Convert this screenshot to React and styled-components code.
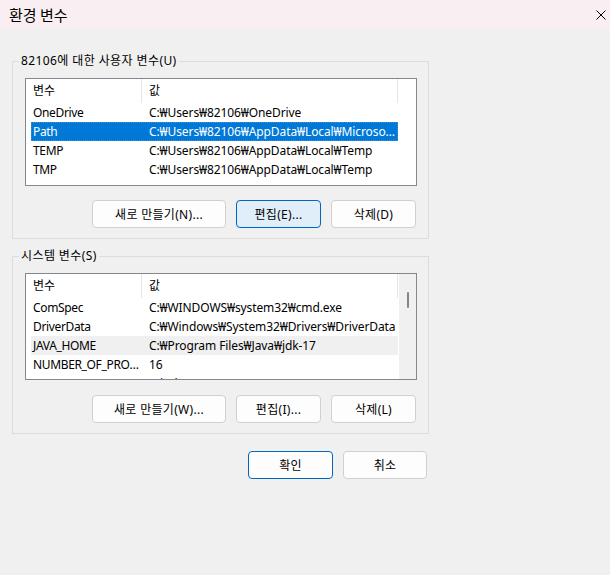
import React from "react";
import styled, { createGlobalStyle } from "styled-components";

const GlobalStyle = createGlobalStyle`
  html, body {
    margin: 0;
    padding: 0;
    background: #f0f0f0;
  }
  body {
    font-family: "Noto Sans", "Noto Sans CJK KR", sans-serif;
    font-size: 12px;
    color: #000;
  }
`;

const userVars = [
  { name: "OneDrive", value: "C:₩Users₩82106₩OneDrive" },
  { name: "Path", value: "C:₩Users₩82106₩AppData₩Local₩Microsoft₩WindowsApps;", selected: true },
  { name: "TEMP", value: "C:₩Users₩82106₩AppData₩Local₩Temp" },
  { name: "TMP", value: "C:₩Users₩82106₩AppData₩Local₩Temp" },
];

const systemVars = [
  { name: "ComSpec", value: "C:₩WINDOWS₩system32₩cmd.exe" },
  { name: "DriverData", value: "C:₩Windows₩System32₩Drivers₩DriverData" },
  { name: "JAVA_HOME", value: "C:₩Program Files₩Java₩jdk-17", hover: true },
  { name: "NUMBER_OF_PROCESSORS", value: "16" },
  { name: "OS", value: "Windows_NT" },
];

const Window = styled.div`
  width: 610px;
  height: 575px;
  background: #f0f0f0;
`;

const TitleBar = styled.div`
  height: 29px;
  display: flex;
  align-items: center;
  justify-content: space-between;
  padding: 0 4px 0 9px;
  background: #f9eff3;
`;

const Title = styled.span`
  font-family: "Noto Sans CJK KR", sans-serif;
  font-size: 15px;
  line-height: 29px;
`;

const CloseButton = styled.div`
  width: 10px;
  height: 10px;
  display: flex;
`;

const Body = styled.div`
  padding: 24px 0 0 12px;
  width: 417px;
`;

const Group = styled.fieldset`
  margin: 0 0 ${(p) => p.$gapBelow || 0}px 0;
  padding: 0;
  border: 1px solid #dcdcdc;
  min-inline-size: 0;
`;

const Legend = styled.legend`
  margin-left: 6px;
  padding: 0 2px;
  line-height: 16px;
  letter-spacing: 0.4px;
`;

const GroupInner = styled.div`
  padding: 9px 11px 10px 12px;
`;

const ListView = styled.div`
  box-sizing: border-box;
  height: ${(p) => p.$height}px;
  border: 1px solid #828790;
  background: #fff;
  display: flex;
  overflow: hidden;
`;

const Table = styled.div`
  padding-left: 5px;
  width: 367px;
  flex-shrink: 0;
`;

const HeaderRow = styled.div`
  display: flex;
  height: 24px;
  line-height: 24px;
`;

const HeaderCell = styled.div`
  box-sizing: border-box;
  width: ${(p) => p.$width}px;
  padding-left: ${(p) => p.$indent}px;
  border-right: 1px solid #e5e5e5;
`;

const Row = styled.div`
  display: flex;
  height: 19px;
  line-height: 19px;
  background: ${(p) => (p.$selected ? "#0078d7" : p.$hover ? "#f0f0f0" : "transparent")};
  color: ${(p) => (p.$selected ? "#fff" : "#000")};
  outline: ${(p) => (p.$selected ? "1px dotted #4a8fd0" : "none")};
  outline-offset: -1px;
`;

const Cell = styled.div`
  box-sizing: border-box;
  width: ${(p) => p.$width}px;
  padding-left: ${(p) => p.$indent}px;
  padding-right: ${(p) => p.$trim || 1}px;
  letter-spacing: ${(p) => p.$tight || -0.1}px;
  white-space: nowrap;
  overflow: hidden;
  text-overflow: ellipsis;
`;

const ScrollTrack = styled.div`
  width: 17px;
  margin-left: 1px;
  background: ${(p) => (p.$visible ? "#f0f0f0" : "#fff")};
  display: flex;
  justify-content: center;
`;

const ScrollThumb = styled.div`
  width: 2px;
  height: 16px;
  margin-top: 18px;
  border-radius: 1px;
  background: #858585;
`;

const ButtonRow = styled.div`
  display: flex;
  justify-content: flex-end;
  gap: 10px;
  margin-top: ${(p) => p.$top}px;
  padding-right: ${(p) => p.$right || 0}px;
`;

const Button = styled.button`
  box-sizing: border-box;
  width: ${(p) => p.$width}px;
  height: 28px;
  padding: 0;
  border-radius: 4px;
  border: 1px solid ${(p) => (p.$accent ? "#0067c0" : "#d0d0d0")};
  background: ${(p) => (p.$focused ? "#e0eef9" : "#fdfdfd")};
  font-family: "Noto Sans", "Noto Sans CJK KR", sans-serif;
  font-size: 12px;
  letter-spacing: 0.3px;
  color: #000;
`;

const VarList = ({ vars, height, scroll }) => (
  <ListView $height={height}>
    <Table>
      <HeaderRow>
        <HeaderCell $width={111} $indent={2}>변수</HeaderCell>
        <HeaderCell $width={256} $indent={7}>값</HeaderCell>
      </HeaderRow>
      {vars.map((v) => (
        <Row key={v.name} $selected={v.selected} $hover={v.hover}>
          <Cell $width={111} $indent={2} $trim={0.1} $tight={-0.35}>{v.name}</Cell>
          <Cell $width={256} $indent={7}>{v.value}</Cell>
        </Row>
      ))}
    </Table>
    <ScrollTrack $visible={scroll}>{scroll && <ScrollThumb />}</ScrollTrack>
  </ListView>
);

export default function App() {
  return (
    <Window>
      <GlobalStyle />
      <TitleBar>
        <Title>환경 변수</Title>
        <CloseButton>
          <svg width="10" height="10" viewBox="0 0 10 10">
            <path d="M0.5 0.5L9.5 9.5M9.5 0.5L0.5 9.5" stroke="#000" strokeWidth="1" />
          </svg>
        </CloseButton>
      </TitleBar>
      <Body>
        <Group $gapBelow={9}>
          <Legend>82106에 대한 사용자 변수(U)</Legend>
          <GroupInner>
            <VarList vars={userVars} height={108} />
            <ButtonRow $top={14} $right={1}>
              <Button $width={134}>새로 만들기(N)...</Button>
              <Button $width={85} $accent $focused>편집(E)...</Button>
              <Button $width={85}>삭제(D)</Button>
            </ButtonRow>
          </GroupInner>
        </Group>
        <Group>
          <Legend>시스템 변수(S)</Legend>
          <GroupInner>
            <VarList vars={systemVars} height={107} scroll />
            <ButtonRow $top={15} $right={1}>
              <Button $width={134}>새로 만들기(W)...</Button>
              <Button $width={85}>편집(I)...</Button>
              <Button $width={85}>삭제(L)</Button>
            </ButtonRow>
          </GroupInner>
        </Group>
        <ButtonRow $top={17} $right={2}>
          <Button $width={85} $accent>확인</Button>
          <Button $width={84}>취소</Button>
        </ButtonRow>
      </Body>
    </Window>
  );
}
